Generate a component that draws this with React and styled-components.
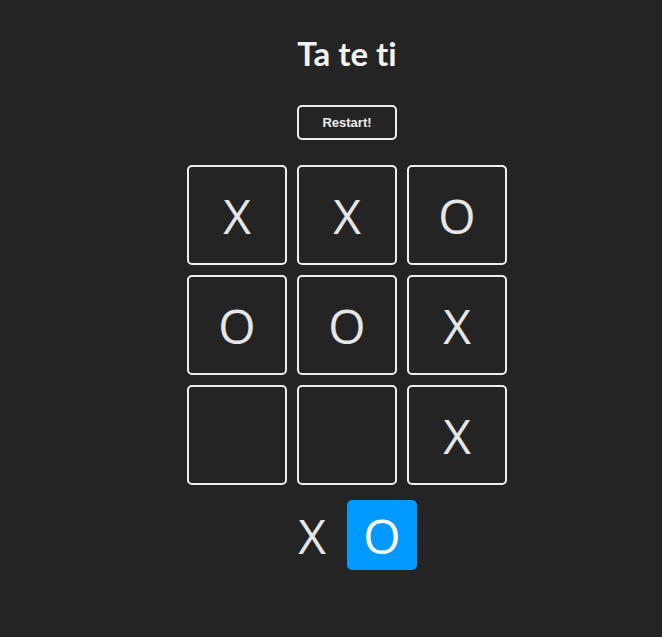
import React from "react";
import styled, {createGlobalStyle} from "styled-components";

const GlobalStyle = createGlobalStyle`
  html, body {
    margin: 0;
    padding: 0;
    background: #242424;
  }
  body {
    color: rgba(255, 255, 255, 0.87);
    font-family: "Open Sans", "DejaVu Sans", sans-serif;
    min-height: 100vh;
  }
`

const Board = styled.main`
  width: fit-content;
  margin: 0 auto;
  padding: 26px 0 0 32px;
  display: flex;
  flex-direction: column;
  align-items: center;
`

const Title = styled.h1`
  margin: 0;
  font-family: Lato, "Open Sans", sans-serif;
  font-size: 33px;
  font-weight: 700;
  line-height: 54px;
  font-variant-ligatures: none;
  color: #f2f2f2;
`

const RestartButton = styled.button`
  margin: 25px 0;
  width: 100px;
  height: 35px;
  padding: 0;
  background: transparent;
  border: 2px solid #eee;
  border-radius: 5px;
  color: #eee;
  font-family: "Liberation Sans", Arial, sans-serif;
  font-size: 13px;
  font-weight: bold;
  cursor: pointer;
`

const Game = styled.section`
  display: grid;
  grid-template-columns: repeat(3, 1fr);
  gap: 10px;
`

const Square = styled.div`
  box-sizing: border-box;
  width: ${p => p.$size}px;
  height: ${p => p.$size}px;
  border: 2px solid ${p => (p.$plain ? "transparent" : "#eee")};
  border-radius: 5px;
  display: grid;
  place-items: center;
  font-size: 48px;
  color: ${p => (p.$selected ? "#fff" : "#e6e6e6")};
  background: ${p => (p.$selected ? "#09f" : "transparent")};
  cursor: pointer;
`

const Turn = styled.section`
  display: flex;
  justify-content: center;
  margin: 15px auto;
  width: fit-content;
`

const board = ["X", "X", "O", "O", "O", "X", null, null, "X"];

export default function App() {
  const turn = "O";
  return (
    <>
      <GlobalStyle/>
      <Board>
        <Title>Ta te ti</Title>
        <RestartButton>Restart!</RestartButton>
        <Game>
          {board.map((cell, i) => (
            <Square key={i} $size={100}>{cell}</Square>
          ))}
        </Game>
        <Turn>
          <Square $size={70} $plain $selected={turn === "X"}>X</Square>
          <Square $size={70} $plain $selected={turn === "O"}>O</Square>
        </Turn>
      </Board>
    </>
  );
}
